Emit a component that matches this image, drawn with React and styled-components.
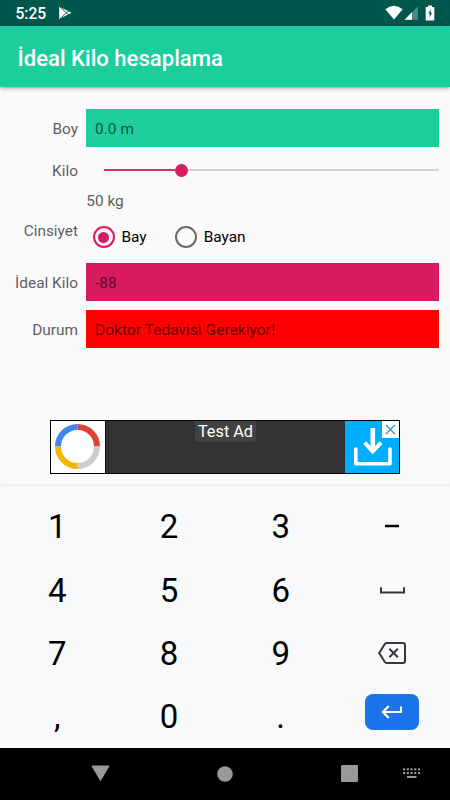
import React from 'react';
import styled, { createGlobalStyle } from 'styled-components';

const GlobalStyle = createGlobalStyle`
  * { box-sizing: border-box; }
  body { margin: 0; background: #fafafa; font-family: Roboto, sans-serif; }
`;

const Screen = styled.div`
  display: flex;
  flex-direction: column;
  width: 450px;
  height: 800px;
  overflow: hidden;
  background: #fafafa;
`;

const StatusBar = styled.header`
  display: flex;
  align-items: center;
  flex: none;
  height: 26px;
  padding: 0 15px 0 15.5px;
  background: #00574b;
  color: #fff;
`;

const Clock = styled.span`
  width: 42.5px;
  padding-top: 2px;
  font-size: 15.6px;
  line-height: 18px;
  font-weight: 500;
`;

const StatusIcons = styled.div`
  display: flex;
  align-items: flex-start;
  margin-left: auto;
`;

const Icon = styled.svg`
  display: block;
  flex: none;
  margin-left: ${(p) => p.$gap || 0}px;
`;

const AppBar = styled.div`
  display: flex;
  align-items: center;
  flex: none;
  height: 61px;
  padding: 2px 17.5px 0;
  background: #1cce9d;
  box-shadow: 0 1px 4px rgba(0, 0, 0, 0.42);
  z-index: 1;
`;

const Title = styled.h1`
  margin: 0;
  color: #fff;
  font-size: 22.1px;
  line-height: 26px;
  font-weight: 500;
`;

const Form = styled.main`
  display: grid;
  flex: none;
  grid-template-columns: 78px 352.7px;
  grid-template-rows: 38px 45px 21px 50px 38px 38px;
  column-gap: 8.3px;
  height: 333px;
  padding-top: 22px;
  font-size: 15.4px;
  line-height: 18px;
`;

const Label = styled.label`
  padding-top: ${(p) => p.$top || 0}px;
  color: #606060;
  text-align: right;
  white-space: nowrap;
`;

const Field = styled.div`
  height: 38px;
  margin-top: ${(p) => p.$gap || 0}px;
  padding: 11px 8.7px 0;
  background: ${(p) => p.$fill};
  color: rgba(0, 0, 0, 0.62);
  letter-spacing: 0.08px;
`;

const Slider = styled.div`
  display: flex;
  align-items: center;
  height: 14px;
  margin: 16px 0 0 17.5px;
`;

const Track = styled.div`
  height: 2px;
  flex: ${(p) => (p.$active ? '0 0 71px' : '1')};
  background: ${(p) => (p.$active ? '#d8326a' : '#d4d4d4')};
`;

const Thumb = styled.div`
  width: 13px;
  height: 13px;
  border-radius: 50%;
  background: #d81b60;
`;

const SliderValue = styled.div`
  grid-column: 2;
  color: #606060;
`;

const RadioGroup = styled.div`
  display: flex;
  height: 22px;
  margin: 13px 0 0 6.7px;
  gap: 28.5px;
`;

const Radio = styled.div`
  display: flex;
  align-items: center;
  gap: 6.5px;
  color: #000;
`;

const RadioMark = styled.span`
  display: flex;
  align-items: center;
  justify-content: center;
  width: 22px;
  height: 22px;
  border: 2px solid ${(p) => (p.$checked ? '#d81b60' : '#6b6b6b')};
  border-radius: 50%;

  &::after {
    content: '';
    width: 11px;
    height: 11px;
    border-radius: 50%;
    background: ${(p) => (p.$checked ? '#d81b60' : 'transparent')};
  }
`;

const AdBanner = styled.aside`
  display: flex;
  flex: none;
  position: relative;
  width: 350px;
  height: 54px;
  margin-left: 50px;
  border: 1px solid #000;
  background: #333;
`;

const AdLogo = styled.div`
  width: 54px;
  padding: 3px 0 0 4px;
  background: #fff;
`;

const AdBody = styled.div`
  flex: 1;
  text-align: center;
  border-left: 1px solid #111;
`;

const AdText = styled.span`
  display: inline-block;
  height: 21px;
  padding: 0 2.5px;
  border-radius: 0 0 3px 3px;
  background: #424242;
  color: #fff;
  font-size: 16.3px;
  line-height: 22px;
`;

const AdAction = styled.div`
  width: 54px;
  padding: 7px 0 0 8px;
  background: #00aeff;
`;

const AdClose = styled.button`
  position: absolute;
  top: 0;
  right: 0;
  width: 17px;
  height: 17px;
  padding: 3px;
  border: 0;
  background: #fff;
`;

const Keyboard = styled.section`
  display: grid;
  flex: none;
  grid-template-columns: repeat(4, 111.7px);
  grid-template-rows: repeat(4, 63.3px);
  height: 262px;
  margin-top: 12px;
  padding: 9.7px 1.5px 0;
  background: #f8f9fb;
  box-shadow: 0 -1px 2px rgba(0, 0, 0, 0.09);
`;

const Key = styled.div`
  display: flex;
  align-items: center;
  justify-content: center;
  padding-bottom: ${(p) => p.$lift || 0}px;
  color: #000;
  font-size: 33px;
  line-height: 40px;
`;

const EnterKey = styled.div`
  display: flex;
  align-items: center;
  justify-content: center;
  width: 54px;
  height: 36px;
  border-radius: 8px;
  background: #1a73e8;
`;

const NavBar = styled.nav`
  display: flex;
  align-items: center;
  flex: none;
  height: 52px;
  padding: 0 29px 1px 91px;
  background: #000;
`;

const KEYBOARD_DOTS = [0, 3.75, 7.5, 11.25, 15];

function WhiteStatusIcons() {
  return (
    <StatusIcons>
      <Icon width="18" height="15" viewBox="0 0 18 15">
        <path d="M0.3 4.2Q9 -2.8 17.7 4.2L9 14.6Z" fill="#fff" />
      </Icon>
      <Icon width="14" height="15" viewBox="0 0 14 15" $gap={1}>
        <path d="M0.5 14.8L13.9 1.4V14.8Z" fill="#4d8981" />
        <path d="M0.5 14.8L8 7.3V14.8Z" fill="#fff" />
      </Icon>
      <Icon width="10" height="16" viewBox="0 0 10 16" $gap={7}>
        <path d="M3 0.6H7V2H9.3V15.6H0.7V2H3Z" fill="#fff" />
        <path d="M6 4.3L3.2 8.6H4.7V12.4L7 7.8H5.5Z" fill="#00574b" />
      </Icon>
    </StatusIcons>
  );
}

export default function App() {
  return (
    <>
      <GlobalStyle />
      <Screen>
        <StatusBar>
          <Clock>5:25</Clock>
          <Icon width="15" height="14" viewBox="0 0 15 14">
            <path d="M1.2 0.8L13.7 6.8L1.2 12.9Z" fill="#fff" />
            <path d="M2 1L10.7 9M2 12.8L10.7 4.8" stroke="#00574b" strokeWidth="0.9" />
          </Icon>
          <WhiteStatusIcons />
        </StatusBar>
        <AppBar>
          <Title>İdeal Kilo hesaplama</Title>
        </AppBar>
        <Form>
          <Label $top={11}>Boy</Label>
          <Field $fill="#1cce9d">0.0 m</Field>
          <Label $top={15}>Kilo</Label>
          <Slider>
            <Track $active />
            <Thumb />
            <Track />
          </Slider>
          <SliderValue>50 kg</SliderValue>
          <Label $top={9}>Cinsiyet</Label>
          <RadioGroup>
            <Radio><RadioMark $checked />Bay</Radio>
            <Radio><RadioMark />Bayan</Radio>
          </RadioGroup>
          <Label $top={11}>İdeal Kilo</Label>
          <Field $fill="#d81b60">-88</Field>
          <Label $top={20}>Durum</Label>
          <Field $fill="#ff0000" $gap={9}>Doktor Tedavisi Gerekiyor!</Field>
        </Form>
        <AdBanner>
          <AdLogo>
            <Icon width="45" height="45" viewBox="0 0 45 45" fill="none" strokeWidth="6">
              <path d="M3 22.5A19.5 19.5 0 0 1 22.5 3" stroke="#4285f4" />
              <path d="M22.5 3A19.5 19.5 0 0 1 42 22.5" stroke="#db4437" />
              <path d="M42 22.5A19.5 19.5 0 0 1 22.5 42" stroke="#cccccc" />
              <path d="M22.5 42A19.5 19.5 0 0 1 3 22.5" stroke="#f4b400" />
            </Icon>
          </AdLogo>
          <AdBody><AdText>Test Ad</AdText></AdBody>
          <AdAction>
            <Icon width="39" height="39" viewBox="0 0 39 39" fill="none" stroke="#fff">
              <path d="M19.8 0V23" strokeWidth="4.6" />
              <path d="M11.6 14.6L19.8 23.4L28 14.6" strokeWidth="4" />
              <path d="M2.8 21V35.7H37V21" strokeWidth="3.6" strokeLinecap="round" strokeLinejoin="round" />
            </Icon>
          </AdAction>
          <AdClose aria-label="Kapat">
            <Icon width="11" height="11" viewBox="0 0 11 11">
              <path d="M1 1L10 10M10 1L1 10" stroke="#20a5be" strokeWidth="1.4" />
            </Icon>
          </AdClose>
        </AdBanner>
        <Keyboard>
          <Key>1</Key>
          <Key>2</Key>
          <Key>3</Key>
          <Key $lift={2}>
            <Icon width="14" height="4" viewBox="0 0 14 4"><path d="M0 2H14" stroke="#000" strokeWidth="2.5" /></Icon>
          </Key>
          <Key>4</Key>
          <Key>5</Key>
          <Key>6</Key>
          <Key $lift={1}>
            <Icon width="25" height="7" viewBox="0 0 25 7" fill="none"><path d="M1 0.3V5.5H24V0.3" stroke="#36383b" strokeWidth="2" /></Icon>
          </Key>
          <Key>7</Key>
          <Key>8</Key>
          <Key>9</Key>
          <Key $lift={1}>
            <Icon width="28" height="22" viewBox="0 0 28 22" fill="none" stroke="#36383b" strokeWidth="2">
              <path d="M8.6 1H25Q27 1 27 3V19Q27 21 25 21H8.6Q7.5 21 6.8 20L1.2 11L6.8 2Q7.5 1 8.6 1Z" />
              <path d="M11.3 6.7L19.9 15.3M19.9 6.7L11.3 15.3" />
            </Icon>
          </Key>
          <Key>,</Key>
          <Key>0</Key>
          <Key>.</Key>
          <Key $lift={10}>
            <EnterKey>
              <Icon width="22" height="14" viewBox="0 0 22 14" fill="none" stroke="#fff" strokeWidth="2.1">
                <path d="M20 1.5V7H2" />
                <path d="M7.8 1L1.8 7L7.8 13" />
              </Icon>
            </EnterKey>
          </Key>
        </Keyboard>
        <NavBar>
          <Icon width="19" height="17" viewBox="0 0 19 17">
            <path d="M1 1H18L9.5 15.5Z" fill="#999" stroke="#999" strokeLinejoin="round" />
          </Icon>
          <Icon width="16" height="16" viewBox="0 0 16 16" $gap={106.5}>
            <circle cx="8" cy="8" r="7.8" fill="#999" />
          </Icon>
          <Icon width="17" height="17" viewBox="0 0 17 17" $gap={108}>
            <rect width="17" height="17" rx="1" fill="#999" />
          </Icon>
          <Icon width="18" height="11" viewBox="0 0 18 11" fill="#999" $gap={45.5}>
            {KEYBOARD_DOTS.map((x) => (
              <React.Fragment key={x}>
                <rect x={x} y="0.3" width="2.1" height="2.1" />
                <rect x={x} y="4" width="2.1" height="2.1" />
              </React.Fragment>
            ))}
            <rect x="4" y="8" width="9.5" height="2" />
          </Icon>
        </NavBar>
      </Screen>
    </>
  );
}
